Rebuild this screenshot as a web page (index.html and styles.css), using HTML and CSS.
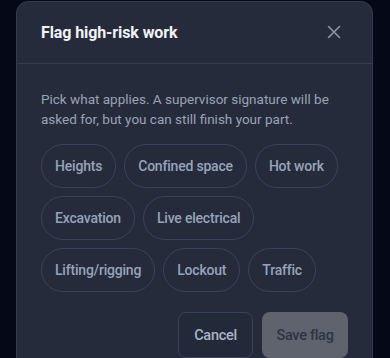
FILE: index.html
```html
<!DOCTYPE html>
<html>
<head>
<meta charset="UTF-8">
<title>Flag high-risk work</title>
<link rel="stylesheet" href="styles.css">
</head>
<body>
<div class="modal">
	<div class="modal_head">
		<h2 class="modal_title">Flag high-risk work</h2>
		<button class="btn_close" type="button" aria-label="Close">
			<svg width="14" height="14" viewBox="0 0 14 14"><path d="M1.5 1.5l11 11M12.5 1.5l-11 11" stroke="currentColor" stroke-width="1.6" stroke-linecap="round" fill="none"/></svg>
		</button>
	</div>

	<div class="modal_body">
		<p class="hint">Pick what applies. A supervisor signature will be asked for, but you can still finish your part.</p>

		<div class="chips">
			<button class="chip" type="button">Heights</button>
			<button class="chip" type="button">Confined space</button>
			<button class="chip" type="button">Hot work</button>
			<button class="chip" type="button">Excavation</button>
			<button class="chip" type="button">Live electrical</button>
			<button class="chip" type="button">Lifting/rigging</button>
			<button class="chip" type="button">Lockout</button>
			<button class="chip" type="button">Traffic</button>
		</div>

		<div class="actions">
			<button class="btn btn_cancel" type="button">Cancel</button>
			<button class="btn btn_save" type="button" disabled>Save flag</button>
		</div>
	</div>
</div>
</body>
</html>
```

FILE: styles.css
```css
*{
	margin:0;
	padding:0;
	box-sizing:border-box;
}
body{
	background-color:#040817;
	font-family:Roboto, "Liberation Sans", sans-serif;
	overflow:hidden;
}
.modal{
	margin:1px 17px 0 16px;
	background-color:#252b3b;
	border:1px solid #323a4c;
	border-radius:12px;
	height:420px;
}
.modal_head{
	display:flex;
	justify-content:space-between;
	align-items:center;
	height:62px;
	padding:0 24px;
	border-bottom:1px solid #343c4e;
}
.modal_title{
	color:#f1f3f7;
	font-size:16px;
	font-weight:700;
	letter-spacing:-0.1px;
}
.btn_close{
	background:none;
	border:none;
	color:#8b94a8;
	display:flex;
	margin-right:7px;
	margin-top:-1px;
	cursor:pointer;
}
.modal_body{
	padding:25px 24px 24px;
}
.hint{
	color:#9aa3b5;
	font-size:13.5px;
	line-height:20px;
}
.chips{
	display:flex;
	flex-wrap:wrap;
	gap:8px;
	margin-top:15px;
}
.chip{
	height:44px;
	padding:0 13px;
	border:1px solid #3a4357;
	border-radius:22px;
	background:transparent;
	color:#97a3b9;
	font-family:inherit;
	font-size:14px;
	font-weight:500;
	letter-spacing:-0.2px;
	cursor:pointer;
}
.actions{
	display:flex;
	justify-content:flex-end;
	gap:9px;
	margin-top:20px;
}
.btn{
	height:46px;
	padding:0 12px;
	border-radius:8px;
	font-family:inherit;
	font-size:14.5px;
	font-weight:500;
	letter-spacing:-0.3px;
}
.btn_cancel{
	background-color:#222939;
	border:1px solid #3a4357;
	color:#aab4c6;
	width:75px;
}
.btn_save{
	background-color:#5e636e;
	border:none;
	color:#2e3441;
	width:86px;
}
```
